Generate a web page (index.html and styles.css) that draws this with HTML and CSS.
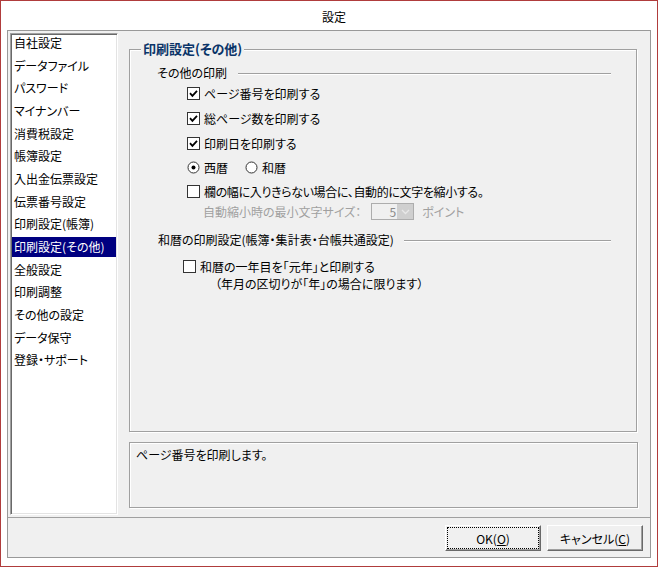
FILE: index.html
```html
<!DOCTYPE html>
<html lang="ja">
<head>
<meta charset="utf-8">
<title>設定</title>
<link rel="stylesheet" href="styles.css">
</head>
<body>
<div class="window">
  <div class="titlebar">設定</div>
  <div class="panel">
    <div class="main">
      <div class="list">
        <ul class="items">
          <li><span>自社設定</span></li>
          <li><span>データファイル</span></li>
          <li><span>パスワード</span></li>
          <li><span>マイナンバー</span></li>
          <li><span>消費税設定</span></li>
          <li><span>帳簿設定</span></li>
          <li><span>入出金伝票設定</span></li>
          <li><span>伝票番号設定</span></li>
          <li><span>印刷設定(帳簿)</span></li>
          <li class="selected"><span>印刷設定(その他)</span></li>
          <li><span>全般設定</span></li>
          <li><span>印刷調整</span></li>
          <li><span>その他の設定</span></li>
          <li><span>データ保守</span></li>
          <li><span>登録・サポート</span></li>
        </ul>
      </div>
      <div class="content">
        <fieldset class="group">
          <legend>印刷設定(その他)</legend>
          <div class="sec sec1"><span>その他の印刷</span><i class="rule"></i></div>
          <div class="opt r25">
            <svg class="box" width="13" height="13" viewBox="0 0 13 13"><rect x="0.5" y="0.5" width="12" height="12" fill="#fff" stroke="#333"/><path d="M3 6.2l2.4 2.6L10 3.8" fill="none" stroke="#000" stroke-width="1.8"/></svg>
            <span>ページ番号を印刷する</span>
          </div>
          <div class="opt r25">
            <svg class="box" width="13" height="13" viewBox="0 0 13 13"><rect x="0.5" y="0.5" width="12" height="12" fill="#fff" stroke="#333"/><path d="M3 6.2l2.4 2.6L10 3.8" fill="none" stroke="#000" stroke-width="1.8"/></svg>
            <span>総ページ数を印刷する</span>
          </div>
          <div class="opt r25">
            <svg class="box" width="13" height="13" viewBox="0 0 13 13"><rect x="0.5" y="0.5" width="12" height="12" fill="#fff" stroke="#333"/><path d="M3 6.2l2.4 2.6L10 3.8" fill="none" stroke="#000" stroke-width="1.8"/></svg>
            <span>印刷日を印刷する</span>
          </div>
          <div class="opt r23">
            <svg class="box" width="13" height="13" viewBox="0 0 13 13"><circle cx="6.5" cy="6.5" r="5.5" fill="#fff" stroke="#333"/><circle cx="6.5" cy="6.5" r="2" fill="#000"/></svg>
            <span>西暦</span>
            <svg class="box radio2" width="13" height="13" viewBox="0 0 13 13"><circle cx="6.5" cy="6.5" r="5.5" fill="#fff" stroke="#333"/></svg>
            <span>和暦</span>
          </div>
          <div class="opt r24">
            <svg class="box" width="13" height="13" viewBox="0 0 13 13"><rect x="0.5" y="0.5" width="12" height="12" fill="#fff" stroke="#333"/></svg>
            <span class="tight">欄の幅に入りきらない場合に、自動的に文字を縮小する。</span>
          </div>
          <div class="opt r17 disabled">
            <span class="autolabel">自動縮小時の最小文字サイズ：</span>
            <div class="combo">
              <span class="val">5</span>
              <span class="drop"><svg width="15" height="15" viewBox="0 0 15 15"><path d="M4 6l3.5 3.5L11 6" fill="none" stroke="#e8e8e8" stroke-width="1.3"/></svg></span>
            </div>
            <span class="unit">ポイント</span>
          </div>
          <div class="sec sec2"><span>和暦の印刷設定(帳簿・集計表・台帳共通設定)</span><i class="rule"></i></div>
          <div class="opt opt2 r18">
            <svg class="box" width="13" height="13" viewBox="0 0 13 13"><rect x="0.5" y="0.5" width="12" height="12" fill="#fff" stroke="#333"/></svg>
            <span>和暦の一年目を「元年」と印刷する</span>
          </div>
          <div class="note">（年月の区切りが「年」の場合に限ります）</div>
        </fieldset>
        <div class="desc">ページ番号を印刷します。</div>
      </div>
    </div>
    <div class="footer">
      <button class="btn default" type="button">OK(<u>O</u>)</button>
      <button class="btn" type="button">キャンセル(<u>C</u>)</button>
    </div>
  </div>
</div>
</body>
</html>
```

FILE: styles.css
```css
* { box-sizing: border-box; }

html, body {
  margin: 0;
  padding: 0;
  background: #fff;
}

body {
  font-family: "Noto Sans CJK JP", "Noto Sans", sans-serif;
  font-size: 12px;
  color: #000;
  font-feature-settings: "palt";
}

.window {
  width: 658px;
  height: 567px;
  border: 1px solid #b03c3c;
  background: #fff;
  display: flex;
  flex-direction: column;
}

.titlebar {
  height: 29px;
  display: flex;
  align-items: center;
  justify-content: center;
  padding-left: 10px;
  padding-top: 1px;
  font-size: 12px;
}

.panel {
  flex: 1;
  margin: 0 6px 8px 6px;
  border: 1px solid #999;
  background: #f0f0f0;
  display: flex;
  flex-direction: column;
}

.main {
  flex: 1;
  display: flex;
  padding: 2px 0 2px 2px;
  min-height: 0;
}

/* list box */
.list {
  width: 108px;
  border: 1px solid;
  border-color: #a0a0a0 #fff #fff #a0a0a0;
  box-shadow: inset 1px 1px #696969, inset -1px -1px #e3e3e3;
  padding: 1px;
  background: #fff;
  overflow: hidden;
}

.items {
  list-style: none;
  margin: -2px 0 0 0;
  padding: 0;
}

.items li {
  height: 22.67px;
}

.items li span {
  display: block;
  height: 20px;
  line-height: 20px;
  padding-left: 2px;
  white-space: nowrap;
}

.items li.selected span {
  background: #000080;
  color: #fff;
}

/* right side */
.content {
  flex: 1;
  display: flex;
  flex-direction: column;
  padding: 8px 12px 7px 11px;
  min-width: 0;
}

.group {
  flex: 1;
  margin: 0 1px 0 0;
  padding: 0;
  min-width: 0;
  border: 1px solid #a0a0a0;
  box-shadow: inset 1px 1px #fff, 1px 1px #fff;
}

.group legend {
  margin-left: 11px;
  padding: 0 2px;
  font-size: 13px;
  font-weight: bold;
  line-height: 16px;
  color: #0a3468;
  background: #f0f0f0;
}

.sec {
  display: flex;
  align-items: center;
  height: 18px;
  margin-right: 25px;
  white-space: nowrap;
}

.sec1 {
  margin-top: 6px;
  padding-left: 27px;
}

.sec1 .rule { margin-left: 11px; }

.sec2 {
  margin-top: 10px;
  padding-left: 28px;
}

.sec2 .rule { margin-left: 10px; }

.rule {
  flex: 1;
  height: 2px;
  margin-top: 3px;
  border-top: 1px solid #a0a0a0;
  border-bottom: 1px solid #fff;
}

.opt {
  display: flex;
  align-items: center;
  padding-left: 57px;
  white-space: nowrap;
}

.opt .box {
  flex: none;
  margin-right: 4px;
}

.opt .radio2 { margin-left: 17px; }

.tight { letter-spacing: -0.35px; }

.r25 { height: 25px; }
.r24 { height: 24px; }
.r23 { height: 23px; }
.r18 { height: 18px; }
.r17 { height: 17px; }

.disabled { color: #a0a0a0; }

.autolabel { margin-left: 16px; }

.combo {
  display: flex;
  width: 43px;
  height: 17px;
  margin-left: 10px;
  border: 1px solid #adadad;
  background: #f0f0f0;
}

.combo .val {
  flex: 1;
  text-align: right;
  line-height: 15px;
  padding-right: 1px;
  color: #8a8a8a;
}

.combo .drop {
  width: 16px;
  background: #cfcfcf;
  display: flex;
  align-items: center;
  justify-content: center;
}

.combo .drop svg { display: block; }

.unit { margin-left: 8px; }

.opt2 {
  margin-top: 9px;
  padding-left: 53px;
}

.note {
  height: 17px;
  line-height: 17px;
  padding-left: 85px;
  white-space: nowrap;
}

.desc {
  height: 66px;
  margin-top: 10px;
  border: 1px solid #a0a0a0;
  box-shadow: inset 1px 1px #fff, 1px 1px #fff;
  padding: 4px 6px;
  line-height: 15px;
}

/* footer */
.footer {
  height: 40px;
  flex: none;
  border-top: 1px solid #a0a0a0;
  display: flex;
  justify-content: flex-end;
  align-items: flex-start;
  gap: 6px;
  padding: 7px 7px 0 0;
}

.btn {
  width: 96px;
  height: 26px;
  padding: 0;
  font-family: inherit;
  font-size: 12px;
  font-feature-settings: "palt";
  color: #000;
  background: #f0f0f0;
  border: 1px solid;
  border-color: #fff #696969 #696969 #fff;
  box-shadow: inset -1px -1px #a0a0a0;
}

.btn.default {
  outline: 1px dotted #000;
  outline-offset: -3px;
}
```
